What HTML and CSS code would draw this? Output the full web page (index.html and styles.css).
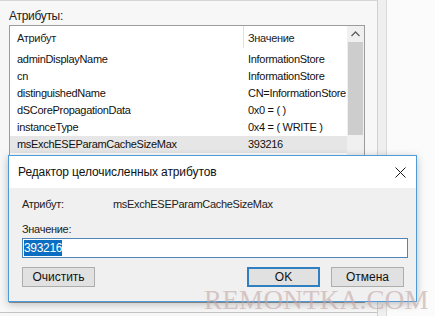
FILE: index.html
```html
<!DOCTYPE html>
<html lang="ru">
<head>
  <meta charset="UTF-8">
  <title>Редактор целочисленных атрибутов</title>
  <link rel="stylesheet" href="styles.css">
</head>
<body>

  <div class="window">
    <div class="main">
      <div class="caption">Атрибуты:</div>
      <div class="listbox">
        <div class="list">
          <div class="header">
            <div class="col-attr">Атрибут</div>
            <div class="col-value">Значение</div>
          </div>
          <div class="rows">
            <div class="row"><div class="col-attr">adminDisplayName</div><div class="col-value">InformationStore</div></div>
            <div class="row"><div class="col-attr">cn</div><div class="col-value">InformationStore</div></div>
            <div class="row"><div class="col-attr">distinguishedName</div><div class="col-value">CN=InformationStore</div></div>
            <div class="row"><div class="col-attr">dSCorePropagationData</div><div class="col-value">0x0 = ( )</div></div>
            <div class="row"><div class="col-attr">instanceType</div><div class="col-value">0x4 = ( WRITE )</div></div>
            <div class="row selected"><div class="col-attr">msExchESEParamCacheSizeMax</div><div class="col-value">393216</div></div>
          </div>
        </div>
        <div class="scrollbar">
          <div class="arrow">
            <svg width="9" height="6" viewBox="0 0 9 6"><path d="M0.5 5 L4.5 1 L8.5 5" fill="none" stroke="#606060" stroke-width="1.3"/></svg>
          </div>
          <div class="thumb"></div>
        </div>
      </div>
    </div>
    <div class="side"></div>
    <div class="rest"></div>
  </div>

  <div class="dialog">
    <div class="titlebar">
      <span class="title">Редактор целочисленных атрибутов</span>
      <svg class="close" width="11" height="11" viewBox="0 0 11 11"><path d="M0.5 0.5 L10.5 10.5 M10.5 0.5 L0.5 10.5" stroke="#1a1a1a" stroke-width="1"/></svg>
    </div>
    <div class="dialog-body">
      <div class="field">
        <span class="field-label">Атрибут:</span>
        <span>msExchESEParamCacheSizeMax</span>
      </div>
      <div class="field value-label">Значение:</div>
      <div class="textbox"><span class="selection">393216</span></div>
      <div class="buttons">
        <button class="btn">Очистить</button>
        <button class="btn btn-default">OK</button>
        <button class="btn">Отмена</button>
      </div>
    </div>
  </div>

  <div class="watermark">REMONTKA.COM</div>

</body>
</html>
```

FILE: styles.css
```css
body {
  margin: 0;
  width: 435px;
  height: 316px;
  overflow: hidden;
  font-family: "Liberation Sans", Arial, sans-serif;
  font-size: 11px;
  letter-spacing: -0.3px;
  color: #111;
  background-color: #f7f7f7;
}

.window {
  display: flex;
  height: 316px;
}

.main {
  width: 368px;
  height: 311px;
  padding-left: 9px;
  border-top: 1px solid #d6d6d6;
  border-bottom: 1px solid #c4c4c4;
}

.caption {
  font-size: 12px;
  line-height: 18px;
  padding-top: 6px;
  color: #222;
}

.listbox {
  display: flex;
  width: 354px;
  height: 276px;
  border: 1px solid #9c9c9c;
  background-color: #fff;
}

.list {
  flex: 1;
}

.header {
  display: flex;
  height: 22px;
  line-height: 24px;
  color: #222;
}

.header .col-value {
  border-left: 1px solid #e2e2e2;
}

.rows {
  padding-top: 3px;
}

.row {
  display: flex;
  height: 17px;
  line-height: 17px;
}

.row.selected {
  background-color: #e6e6e6;
}

.col-attr {
  width: 226px;
  padding-left: 7px;
}

.col-value {
  flex: 1;
  padding-left: 4px;
  white-space: nowrap;
  overflow: hidden;
}

.row .col-value {
  padding-left: 5px;
}

.scrollbar {
  width: 17px;
  background-color: #f0f0f0;
}

.arrow {
  height: 16px;
  display: flex;
  align-items: center;
  justify-content: center;
}

.thumb {
  height: 93px;
  margin: 0 1px;
  background-color: #cdcdcd;
}

.side {
  width: 8px;
  border-left: 1px solid #d0d0d0;
  border-right: 1px solid #dadada;
  background-color: #efefef;
}

.rest {
  flex: 1;
  background-color: #fbfbfb;
}

.dialog {
  position: absolute;
  left: 8px;
  top: 155px;
  width: 407px;
  height: 145px;
  border: 1px solid #4d9bd9;
  background-color: #f0f0f0;
  box-shadow: 0 2px 8px rgba(0, 0, 0, 0.25);
}

.titlebar {
  display: flex;
  align-items: center;
  justify-content: space-between;
  height: 32px;
  padding: 0 10px 0 9px;
  background-color: #fff;
}

.title {
  font-size: 12px;
  letter-spacing: -0.1px;
  color: #111;
}

.dialog-body {
  padding: 0 10px 0 13px;
}

.field {
  display: flex;
  line-height: 16px;
  margin-top: 8px;
  color: #222;
}

.field-label {
  width: 91px;
}

.value-label {
  margin-top: 9px;
}

.textbox {
  height: 18px;
  margin-top: 1px;
  width: 383px;
  border: 1px solid #4f86b8;
  background-color: #fff;
  line-height: 18px;
  padding-left: 1px;
  box-sizing: content-box;
  font-size: 12px;
}

.selection {
  background-color: #0a6fc2;
  color: #fff;
  padding: 1px 0;
}

.buttons {
  display: flex;
  margin-top: 9px;
  width: 382px;
}

.btn {
  width: 73px;
  height: 20px;
  padding: 0;
  font-family: "Liberation Sans", Arial, sans-serif;
  font-size: 12px;
  color: #111;
  background-color: #e1e1e1;
  border: 1px solid #adadad;
}

.btn-default {
  margin-left: auto;
  margin-right: 11px;
  border: 2px solid #2f7fc1;
}

.watermark {
  position: absolute;
  left: 204px;
  top: 285px;
  font-family: "Liberation Serif", "Times New Roman", serif;
  font-size: 27px;
  letter-spacing: 0.3px;
  color: #c4a8a8;
  opacity: 0.6;
  pointer-events: none;
}
```
